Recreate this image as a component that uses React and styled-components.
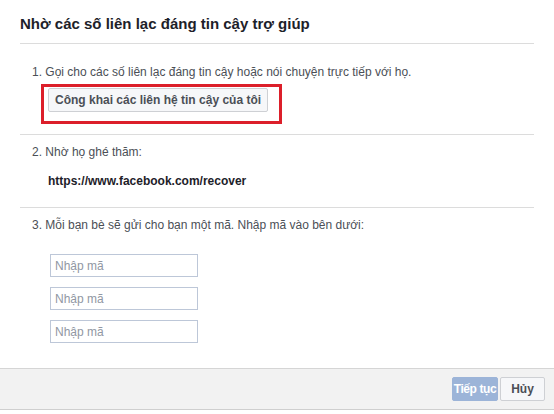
import * as React from "react";
import styled, { createGlobalStyle } from "styled-components";

const GlobalStyle = createGlobalStyle`
  html, body {
    margin: 0;
    padding: 0;
    background: #ffffff;
  }
  body {
    font-family: "Liberation Sans", Arial, Helvetica, sans-serif;
  }
`;

const codeInputs = ["code-1", "code-2", "code-3"];

function App() {
  return (
    <>
      <GlobalStyle />
      <Dialog>
        <Header>
          <Title>Nhờ các số liên lạc đáng tin cậy trợ giúp</Title>
        </Header>
        <Body>
          <Step $top={20} $bottom={10}>
            <StepText>
              1. Gọi cho các số liên lạc đáng tin cậy hoặc nói chuyện trực tiếp
              với họ.
            </StepText>
            <Highlight>
              <GrayButton type="button">
                Công khai các liên hệ tin cậy của tôi
              </GrayButton>
            </Highlight>
          </Step>
          <Step $top={9} $bottom={18}>
            <StepText>2. Nhờ họ ghé thăm:</StepText>
            <Url>https://www.facebook.com/recover</Url>
          </Step>
          <Step $top={9} $bottom={0} $last>
            <StepText>
              3. Mỗi bạn bè sẽ gửi cho bạn một mã. Nhập mã vào bên dưới:
            </StepText>
            <CodeList>
              {codeInputs.map((id) => (
                <CodeInput key={id} id={id} placeholder="Nhập mã" />
              ))}
            </CodeList>
          </Step>
        </Body>
        <Footer>
          <PrimaryButton type="button" disabled>
            Tiếp tục
          </PrimaryButton>
          <CancelButton type="button">Hủy</CancelButton>
        </Footer>
      </Dialog>
    </>
  );
}

const Dialog = styled.div`
  width: 554px;
  height: 410px;
  display: flex;
  flex-direction: column;
  background: #ffffff;
  color: #4b4f56;
`;

const Header = styled.div`
  margin: 0 20px;
  padding: 15px 0 10px;
  border-bottom: 1px solid #dcdcdc;
`;

const Title = styled.h1`
  margin: 0;
  font-size: 15px;
  line-height: 18px;
  font-weight: bold;
  color: #1d2129;
`;

const Body = styled.div`
  flex: 1;
  margin: 0 20px;
  display: flex;
  flex-direction: column;
`;

const Step = styled.div`
  display: flex;
  flex-direction: column;
  align-items: flex-start;
  padding: ${(p) => p.$top}px 12px ${(p) => p.$bottom}px;
  border-bottom: ${(p) => (p.$last ? "none" : "1px solid #dcdcdc")};
`;

const StepText = styled.p`
  margin: 0;
  font-size: 12px;
  line-height: 16px;
  color: #4b4f56;
`;

const Highlight = styled.div`
  display: inline-flex;
  margin: 4px 0 0 9px;
  padding: 1px 11px 9px 4px;
  border: 3px solid #dc1f2a;
`;

const GrayButton = styled.button`
  height: 24px;
  padding: 0 6px;
  font-family: inherit;
  font-size: 12px;
  font-weight: bold;
  color: #4b4f56;
  background: #f6f7f9;
  border: 1px solid #ced0d4;
  border-radius: 2px;
`;

const Url = styled.div`
  margin: 13px 0 0 16px;
  font-size: 12px;
  line-height: 16px;
  font-weight: bold;
  color: #1d2129;
`;

const CodeList = styled.div`
  display: flex;
  flex-direction: column;
  gap: 10px;
  margin: 21px 0 0 18px;
`;

const CodeInput = styled.input`
  box-sizing: border-box;
  width: 148px;
  height: 23px;
  padding: 0 4px;
  font-family: inherit;
  font-size: 12px;
  color: #1d2129;
  border: 1px solid #bdc7d8;
  border-radius: 0;
  outline: none;

  &::placeholder {
    color: #9197a3;
  }
`;

const Footer = styled.div`
  box-sizing: border-box;
  height: 42px;
  display: flex;
  justify-content: flex-end;
  align-items: center;
  gap: 2px;
  padding: 0 9px 1px 0;
  background: #f2f2f2;
  border-top: 1px solid #d5d5d5;
  border-bottom: 1px solid #cfcfcf;
`;

const FooterButton = styled.button`
  box-sizing: border-box;
  height: 24px;
  font-family: inherit;
  font-size: 12px;
  font-weight: bold;
  border-radius: 2px;
`;

const PrimaryButton = styled(FooterButton)`
  width: 46px;
  padding: 0;
  letter-spacing: -0.4px;
  color: #ffffff;
  background: #9cb4d8;
  border: 1px solid #9cb4d8;
`;

const CancelButton = styled(FooterButton)`
  width: 45px;
  padding: 0;
  color: #4b4f56;
  background: #f6f7f9;
  border: 1px solid #ced0d4;
`;

export default App;
